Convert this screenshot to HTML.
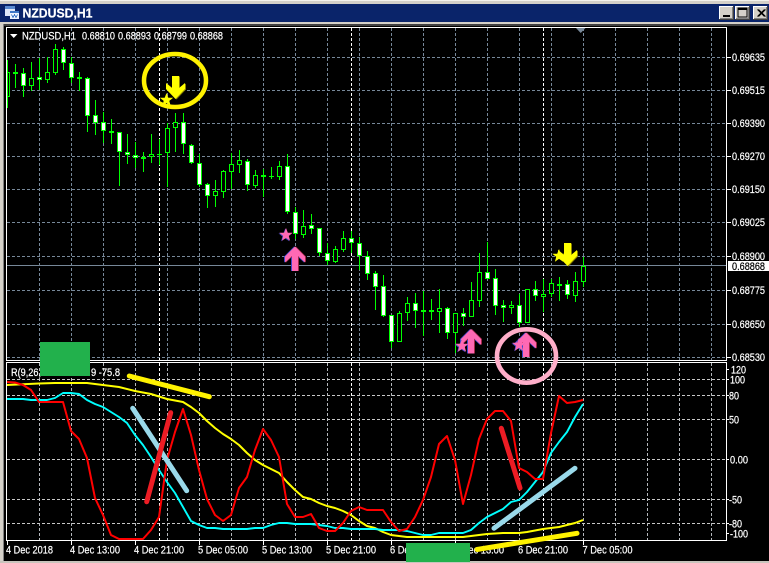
<!DOCTYPE html>
<html><head><meta charset="utf-8"><title>NZDUSD,H1</title>
<style>
html,body{margin:0;padding:0;background:#000;width:769px;height:563px;overflow:hidden}
svg{display:block;position:absolute;left:0;top:0}
text{font-family:"Liberation Sans",sans-serif;font-size:11px;fill:#fff;stroke:#fff;stroke-width:.22px}
</style></head><body>
<svg width="769" height="563" viewBox="0 0 769 563" xmlns="http://www.w3.org/2000/svg">
<defs>
<clipPath id="main"><rect x="7" y="28" width="719" height="332"/></clipPath>
<clipPath id="ind"><rect x="7" y="363" width="719" height="177"/></clipPath>
<polygon id="pa" points="295,246.5 305,256.5 305,262.5 298,256 298,271 292,271 292,256 285,262.5 285,256.5"/>
<polygon id="ya" points="172,76 179,76 179,88 185,83 185,89 175.5,99 166,89 166,83 172,88"/>
<polygon id="st" points="0,-7 1.8,-2.2 6.7,-2.2 2.8,0.9 4.1,5.7 0,2.9 -4.1,5.7 -2.8,0.9 -6.7,-2.2 -1.8,-2.2"/>
<g id="pink"><use href="#pa" x="-1" fill="#3c46c8"/><use href="#pa" x="1" fill="#a02848"/><use href="#pa" fill="#ff69b4"/></g>
<g id="pstar"><use href="#st" x="-0.8" y="0.6" fill="#4648c0"/><use href="#st" fill="#ff69b4"/></g>
<g id="yarrow"><use href="#ya" x="1" y="0.5" fill="#8a8000"/><use href="#ya" fill="#ffff00"/></g>
</defs>

<!-- window frame -->
<rect width="769" height="563" fill="#000"/>
<rect x="0" y="0" width="769" height="4" fill="#d4d0c8"/>
<rect x="0" y="0" width="769" height="1" fill="#f4f2ec"/>
<rect x="0" y="4" width="769" height="18" fill="#0a246a"/>
<rect x="0" y="22" width="769" height="2" fill="#d4d0c8"/>
<rect x="0" y="24" width="769" height="2" fill="#404040"/>
<rect x="0" y="22" width="3" height="541" fill="#d4d0c8"/>
<rect x="3" y="24" width="1" height="537" fill="#808080"/>
<rect x="0" y="561" width="769" height="2" fill="#c8c4bc"/>

<!-- title icon -->
<g shape-rendering="crispEdges">
<rect x="5" y="6" width="10" height="10" fill="#dfe8f8" stroke="none"/>
<rect x="5" y="6" width="10" height="3" fill="#5a8ad0"/>
<rect x="10" y="11" width="9" height="8" fill="#eef4ff"/>
<rect x="10" y="11" width="9" height="2" fill="#3f78c8"/>
<path d="M11.5 14.5l1.5 3 1.5-3 1.5 3 1.5-3" fill="none" stroke="#3f78c8"/>
</g>
<text x="22.5" y="17.5" font-weight="bold" textLength="70" lengthAdjust="spacingAndGlyphs" style="font-size:13px;font-weight:bold">NZDUSD,H1</text>

<!-- window buttons -->
<g shape-rendering="crispEdges">
<rect x="719" y="6" width="15" height="14" fill="#404040"/><rect x="719" y="6" width="14" height="13" fill="#fff"/><rect x="720" y="7" width="13" height="12" fill="#808080"/><rect x="720" y="7" width="12" height="11" fill="#d4d0c8"/>
<rect x="735" y="6" width="15" height="14" fill="#404040"/><rect x="735" y="6" width="14" height="13" fill="#fff"/><rect x="736" y="7" width="13" height="12" fill="#808080"/><rect x="736" y="7" width="12" height="11" fill="#d4d0c8"/>
<rect x="753" y="6" width="15" height="14" fill="#404040"/><rect x="753" y="6" width="14" height="13" fill="#fff"/><rect x="754" y="7" width="13" height="12" fill="#808080"/><rect x="754" y="7" width="12" height="11" fill="#d4d0c8"/>
<rect x="723" y="15" width="7" height="2" fill="#000"/>
<rect x="738" y="8" width="9" height="9" fill="none" stroke="#000"/>
<rect x="738" y="8" width="9" height="2" fill="#000"/>
</g>
<path d="M757.5 9.5l7 7M764.5 9.5l-7 7M758.5 9.5l7 7M765.5 9.5l-7 7" stroke="#000" stroke-width="1" fill="none"/>

<!-- main grid -->
<g clip-path="url(#main)" shape-rendering="crispEdges" fill="none">
<path stroke="#778899" stroke-dasharray="3 2" d="M39.5 28V360M71.5 28V360M103.5 28V360M135.5 28V360M167.5 28V360M199.5 28V360M231.5 28V360M263.5 28V360M295.5 28V360M327.5 28V360M359.5 28V360M391.5 28V360M423.5 28V360M455.5 28V360M487.5 28V360M519.5 28V360M551.5 28V360M583.5 28V360M615.5 28V360M647.5 28V360M679.5 28V360M711.5 28V360"/>
<path stroke="#778899" stroke-dasharray="3 2" d="M7 57.5H726M7 90.5H726M7 123.5H726M7 156.5H726M7 189.5H726M7 222.5H726M7 256.5H726M7 290.5H726M7 324.5H726M7 357.5H726"/>
<path stroke="#fff" stroke-dasharray="3 2" d="M159.5 28V360M351.5 28V360M543.5 28V360"/>
<path stroke="#778899" d="M7 265.5H726"/>

<!-- wicks -->
<path stroke="#00ff00" d="M7.5 60V108M15.5 64V88M23.5 68V97M31.5 62V91M39.5 58V90M47.5 57V83M55.5 44V75M63.5 47V70M71.5 57V83M79.5 72V91M87.5 77V132M95.5 100V135M103.5 112V143M111.5 119V144M119.5 132V186M127.5 134V164M135.5 142V168M143.5 152V172M151.5 134V163M159.5 139V165M167.5 123V187M175.5 113V152M183.5 113V154M191.5 144V164M199.5 154V187M207.5 183V208M215.5 180V207M223.5 170V198M231.5 153V189M239.5 150V173M247.5 159V191M255.5 170V188M263.5 169V197M271.5 167V179M279.5 161V180M287.5 154V214M295.5 207V239M303.5 210V238M311.5 214V234M319.5 228V256M327.5 243V265M335.5 246V263M343.5 231V252M351.5 231V253M359.5 237V270M367.5 251V280M375.5 271V310M383.5 275V317M391.5 315V348M399.5 311V342M407.5 297V321M415.5 293V328M423.5 291V336M431.5 299V320M439.5 289V333M447.5 307V339M455.5 313V353M463.5 308V326M471.5 282V317M479.5 253V307M487.5 242V279M495.5 269V315M503.5 300V322M511.5 301V314M519.5 294V327M527.5 289V323M535.5 281V301M543.5 279V312M551.5 279V297M559.5 277V301M567.5 280V299M575.5 272V302M583.5 257V287"/>
<!-- dojis -->
<path stroke="#00ff00" d="M13 72.5H18M13 73.5H18M77 77.5H82M77 78.5H82M109 131.5H114M109 132.5H114M157 154.5H162M261 175.5H266M261 176.5H266M269 176.5H274M421 310.5H426M421 311.5H426M429 310.5H434M429 311.5H434"/>
<!-- hollow bodies -->
<path stroke="#00ff00" fill="#000" d="M7.5 72.5h2V96.5h-2zM29.5 78.5h4V85.5h-4zM45.5 72.5h4V79.5h-4zM53.5 49.5h4V72.5h-4zM149.5 154.5h4V156.5h-4zM165.5 128.5h4V152.5h-4zM173.5 122.5h4V127.5h-4zM213.5 191.5h4V195.5h-4zM221.5 171.5h4V191.5h-4zM229.5 164.5h4V171.5h-4zM237.5 160.5h4V164.5h-4zM253.5 175.5h4V185.5h-4zM277.5 166.5h4V176.5h-4zM301.5 226.5h4V234.5h-4zM333.5 249.5h4V261.5h-4zM341.5 238.5h4V249.5h-4zM397.5 313.5h4V341.5h-4zM405.5 303.5h4V312.5h-4zM437.5 308.5h4V311.5h-4zM453.5 313.5h4V332.5h-4zM469.5 300.5h4V316.5h-4zM477.5 272.5h4V300.5h-4zM509.5 305.5h4V307.5h-4zM525.5 289.5h4V322.5h-4zM541.5 294.5h4V296.5h-4zM549.5 283.5h4V293.5h-4zM573.5 281.5h4V295.5h-4zM581.5 266.5h4V281.5h-4z"/>
<!-- white bodies -->
<path stroke="#00ff00" fill="#fff" d="M21.5 73.5h4V85.5h-4zM37.5 77.5h4V79.5h-4zM61.5 49.5h4V62.5h-4zM69.5 63.5h4V77.5h-4zM85.5 78.5h4V115.5h-4zM93.5 115.5h4V122.5h-4zM101.5 122.5h4V130.5h-4zM117.5 132.5h4V151.5h-4zM125.5 152.5h4V154.5h-4zM133.5 155.5h4V157.5h-4zM141.5 157.5h4V158.5h-4zM181.5 122.5h4V143.5h-4zM189.5 145.5h4V162.5h-4zM197.5 163.5h4V184.5h-4zM205.5 184.5h4V195.5h-4zM245.5 161.5h4V184.5h-4zM285.5 166.5h4V211.5h-4zM293.5 212.5h4V233.5h-4zM309.5 225.5h4V228.5h-4zM317.5 228.5h4V252.5h-4zM325.5 253.5h4V260.5h-4zM349.5 238.5h4V242.5h-4zM357.5 243.5h4V255.5h-4zM365.5 256.5h4V273.5h-4zM373.5 273.5h4V286.5h-4zM381.5 286.5h4V315.5h-4zM389.5 315.5h4V341.5h-4zM413.5 303.5h4V310.5h-4zM445.5 308.5h4V332.5h-4zM461.5 313.5h4V316.5h-4zM485.5 272.5h4V278.5h-4zM493.5 278.5h4V305.5h-4zM501.5 305.5h4V307.5h-4zM517.5 305.5h4V322.5h-4zM533.5 289.5h4V295.5h-4zM557.5 284.5h4V285.5h-4zM565.5 284.5h4V294.5h-4z"/>
</g>

<!-- indicator grid -->
<g clip-path="url(#ind)" shape-rendering="crispEdges" fill="none">
<path stroke="#b4b8bc" stroke-dasharray="3 2" d="M39.5 363V540M71.5 363V540M103.5 363V540M135.5 363V540M167.5 363V540M199.5 363V540M231.5 363V540M263.5 363V540M295.5 363V540M327.5 363V540M359.5 363V540M391.5 363V540M423.5 363V540M455.5 363V540M487.5 363V540M519.5 363V540M551.5 363V540M583.5 363V540M615.5 363V540M647.5 363V540M679.5 363V540M711.5 363V540"/>
<path stroke="#c8c8c8" stroke-dasharray="3 2" d="M7 379.5H726M7 395.5H726M7 419.5H726M7 459.5H726M7 499.5H726M7 523.5H726"/>
<path stroke="#fff" stroke-dasharray="3 2" d="M159.5 363V540M351.5 363V540M543.5 363V540"/>
</g>

<!-- indicator lines -->
<g clip-path="url(#ind)" fill="none" stroke-linejoin="round">
<polyline stroke="#ffff00" stroke-width="2" points="7,385 39,383.5 55,383 87,383 103,385 119,387 135,391 151,394 167,399 183,402 191,407 199,413 207,421 215,428 223,434 231,439 239,445 247,453 255,460 263,465 271,469 279,473 287,482 295,490 303,497 311,499 319,503 327,506 335,508 343,511 351,515 359,521 367,526 375,528 383,532 391,535 399,536 407,537 431,537 463,537 471,536 487,534 503,533 519,533 527,532 543,529 551,528 559,527 575,523 583,520"/>
<polyline stroke="#00ffff" stroke-width="1.9" points="7,399 23,399 31,400 47,400 55,398 63,393 71,393 79,394 87,400 95,404 103,407 111,412 119,417 127,423 135,435 143,445 151,457 159,470 167,482 175,493 183,507 191,521 199,525 207,528 215,528 223,529 247,529 255,528 263,528 271,525 279,523 287,523 295,524 311,524 319,525 327,526 335,528 343,528 351,529 375,529 383,530 399,530 407,531 415,533 423,535 431,535 439,533 463,533 471,530 479,523 487,517 495,513 503,509 511,502 519,500 527,492 535,482 543,472 551,453 559,442 567,432 575,417 583,404"/>
<polyline stroke="#ff0000" stroke-width="2" points="7,382 15,382.5 23,385 31,390 39,402 63,402 71,431 79,439 87,458 95,498 103,515 111,535 119,539 143,539 151,530 159,517 167,460 175,432 183,409 191,435 199,470 207,499 215,515 223,521 231,515 239,488 247,477 255,450 263,429 271,440 279,457 287,504 295,517 303,517 311,514 319,528 327,531 335,531 343,523 351,511 359,507 367,510 383,510 391,522 399,531 407,529 415,517 423,500 431,477 439,444 447,436 455,460 463,504 471,475 479,439 487,419 495,411 503,411 511,421 519,468 527,472 535,479 543,479 551,433 559,396 567,403 575,402 583,400"/>
</g>

<!-- chart borders -->
<g shape-rendering="crispEdges" fill="none" stroke="#fff">
<rect x="6.5" y="27.5" width="720" height="333"/>
<rect x="6.5" y="362.5" width="720" height="178"/>
<path d="M7.5 541V545M71.5 541V545M135.5 541V545M199.5 541V545M263.5 541V545M327.5 541V545M391.5 541V545M455.5 541V545M519.5 541V545M583.5 541V545"/>
<path d="M727 57.5H731M727 90.5H731M727 123.5H731M727 156.5H731M727 189.5H731M727 222.5H731M727 256.5H731M727 290.5H731M727 324.5H731M727 357.5H731M727 369.5H729M727 379.5H729M727 395.5H729M727 419.5H729M727 459.5H729M727 499.5H729M727 523.5H729M727 533.5H729"/>
</g>
<polygon points="10,34 17.5,34 13.75,38" fill="#fff"/>
<polygon points="576,28 585.5,28 580.7,33" fill="#778899"/>

<!-- price tag -->
<rect x="728" y="261" width="41" height="10" fill="#fff" shape-rendering="crispEdges"/>

<!-- header text -->
<text x="22" y="39.5" textLength="54" lengthAdjust="spacingAndGlyphs">NZDUSD,H1</text>
<text x="82" y="39.5" textLength="33" lengthAdjust="spacingAndGlyphs">0.68810</text>
<text x="118" y="39.5" textLength="33" lengthAdjust="spacingAndGlyphs">0.68893</text>
<text x="154" y="39.5" textLength="33" lengthAdjust="spacingAndGlyphs">0.68799</text>
<text x="190" y="39.5" textLength="33" lengthAdjust="spacingAndGlyphs">0.68868</text>

<!-- price labels -->
<g>
<text x="732" y="61" textLength="33" lengthAdjust="spacingAndGlyphs">0.69635</text>
<text x="732" y="94" textLength="33" lengthAdjust="spacingAndGlyphs">0.69515</text>
<text x="732" y="127" textLength="33" lengthAdjust="spacingAndGlyphs">0.69390</text>
<text x="732" y="160" textLength="33" lengthAdjust="spacingAndGlyphs">0.69270</text>
<text x="732" y="193" textLength="33" lengthAdjust="spacingAndGlyphs">0.69150</text>
<text x="732" y="226" textLength="33" lengthAdjust="spacingAndGlyphs">0.69025</text>
<text x="732" y="260" textLength="33" lengthAdjust="spacingAndGlyphs">0.68900</text>
<text x="732" y="270" textLength="33" lengthAdjust="spacingAndGlyphs" style="fill:#000;stroke:#000">0.68868</text>
<text x="732" y="294" textLength="33" lengthAdjust="spacingAndGlyphs">0.68775</text>
<text x="732" y="328" textLength="33" lengthAdjust="spacingAndGlyphs">0.68650</text>
<text x="732" y="361" textLength="33" lengthAdjust="spacingAndGlyphs">0.68530</text>
<text x="731" y="373.5" textLength="15" lengthAdjust="spacingAndGlyphs">120</text>
<text x="730" y="383.5" textLength="15" lengthAdjust="spacingAndGlyphs">100</text>
<text x="729" y="399.5" textLength="10" lengthAdjust="spacingAndGlyphs">80</text>
<text x="729" y="423.5" textLength="10" lengthAdjust="spacingAndGlyphs">50</text>
<text x="730" y="463.5" textLength="18" lengthAdjust="spacingAndGlyphs">0.00</text>
<text x="729" y="503.5" textLength="13" lengthAdjust="spacingAndGlyphs">-50</text>
<text x="729" y="527.5" textLength="13" lengthAdjust="spacingAndGlyphs">-80</text>
<text x="730" y="537.5" textLength="18" lengthAdjust="spacingAndGlyphs">-100</text>
</g>

<!-- indicator label -->
<text x="11" y="376" textLength="30" lengthAdjust="spacingAndGlyphs">R(9,26,</text>
<text x="91" y="376" textLength="29" lengthAdjust="spacingAndGlyphs">9 -75.8</text>

<!-- time labels -->
<g>
<text x="6" y="553.5" textLength="47" lengthAdjust="spacingAndGlyphs">4 Dec 2018</text>
<text x="70" y="553.5" textLength="50" lengthAdjust="spacingAndGlyphs">4 Dec 13:00</text>
<text x="134" y="553.5" textLength="50" lengthAdjust="spacingAndGlyphs">4 Dec 21:00</text>
<text x="198" y="553.5" textLength="50" lengthAdjust="spacingAndGlyphs">5 Dec 05:00</text>
<text x="262" y="553.5" textLength="50" lengthAdjust="spacingAndGlyphs">5 Dec 13:00</text>
<text x="326" y="553.5" textLength="50" lengthAdjust="spacingAndGlyphs">5 Dec 21:00</text>
<text x="390" y="553.5" textLength="50" lengthAdjust="spacingAndGlyphs">6 Dec 05:00</text>
<text x="454" y="553.5" textLength="50" lengthAdjust="spacingAndGlyphs">6 Dec 13:00</text>
<text x="518" y="553.5" textLength="50" lengthAdjust="spacingAndGlyphs">6 Dec 21:00</text>
<text x="582.5" y="553.5" textLength="50" lengthAdjust="spacingAndGlyphs">7 Dec 05:00</text>
</g>

<!-- annotations -->
<rect x="40" y="342" width="50" height="34" fill="#22b14c"/>
<rect x="406" y="543" width="64" height="19" fill="#22b14c"/>

<g fill="none" stroke-linecap="round">
<line x1="129.3" y1="376" x2="209.3" y2="396.7" stroke="#fff200" stroke-width="5"/>
<line x1="132.7" y1="408.3" x2="186.7" y2="490.7" stroke="#99d9ea" stroke-width="5"/>
<line x1="170.7" y1="412.7" x2="146.7" y2="501.7" stroke="#ed1c24" stroke-width="5"/>
<line x1="494" y1="528.3" x2="575" y2="468.3" stroke="#99d9ea" stroke-width="5"/>
<line x1="501.3" y1="428.3" x2="520" y2="488" stroke="#ed1c24" stroke-width="5"/>
<line x1="477" y1="549.5" x2="577" y2="533.3" stroke="#fff200" stroke-width="5"/>
</g>

<use href="#st" x="166.5" y="100" fill="#ffff00"/>
<use href="#yarrow"/>
<ellipse cx="175" cy="80.5" rx="31" ry="26.5" fill="none" stroke="#fff200" stroke-width="4.5"/>

<use href="#pstar" x="286" y="235"/>
<use href="#pink"/>
<use href="#pink" x="176" y="82.5"/>
<use href="#pstar" x="462" y="346"/>
<use href="#pink" x="231" y="86"/>
<use href="#pstar" x="519" y="345"/>
<ellipse cx="526.5" cy="356" rx="29.5" ry="26.7" fill="none" stroke="#ffaec9" stroke-width="4.6"/>

<use href="#st" x="559" y="256" fill="#ffff00"/>
<use href="#yarrow" x="392" y="167"/>
</svg>
</body></html>
